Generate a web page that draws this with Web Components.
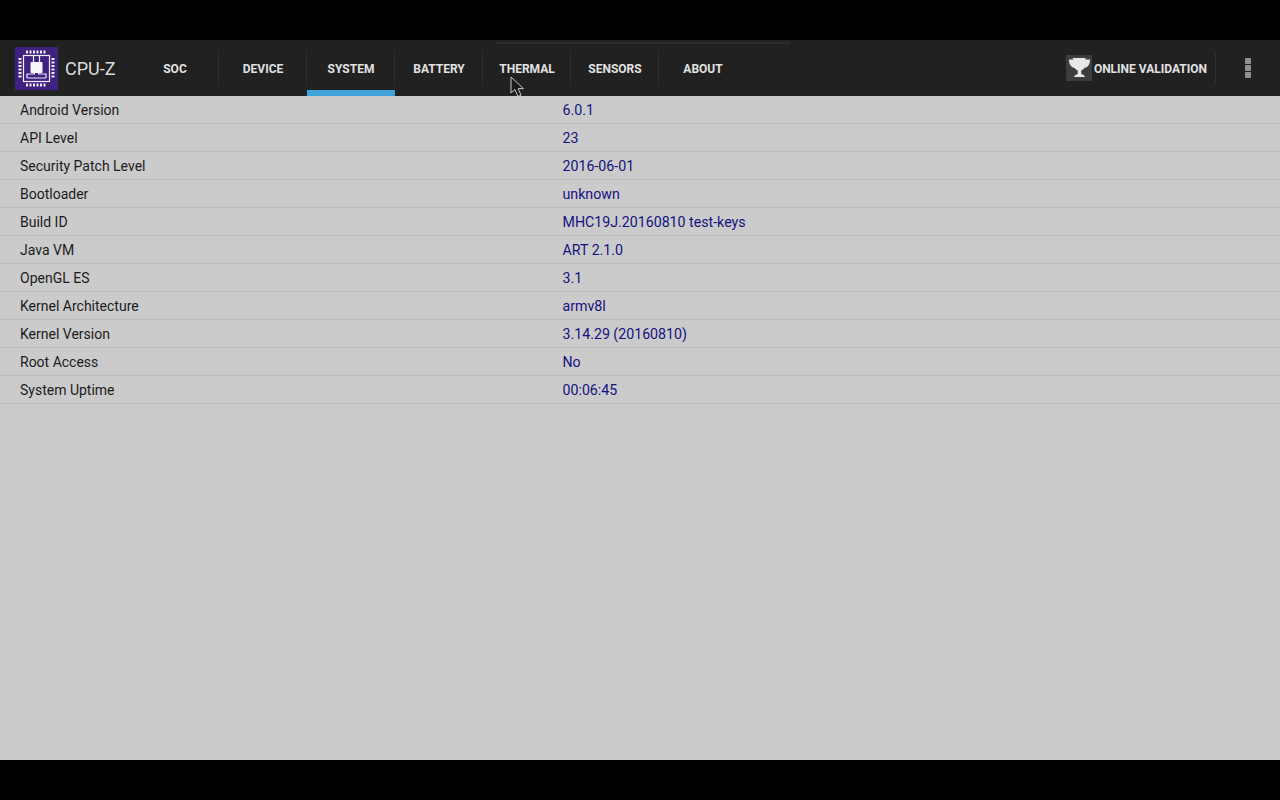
<!DOCTYPE html>
<html>
<head>
<meta charset="utf-8">
<title>CPU-Z</title>
<style>
  html, body { margin: 0; height: 100%; background: #000; }
  body { font-family: Roboto, "Liberation Sans", sans-serif; overflow: hidden; }
</style>
</head>
<body>
<cpuz-app>
  <cpuz-toolbar slot="bar">
    <cpuz-tab>SOC</cpuz-tab>
    <cpuz-tab>DEVICE</cpuz-tab>
    <cpuz-tab active>SYSTEM</cpuz-tab>
    <cpuz-tab>BATTERY</cpuz-tab>
    <cpuz-tab>THERMAL</cpuz-tab>
    <cpuz-tab>SENSORS</cpuz-tab>
    <cpuz-tab last>ABOUT</cpuz-tab>
  </cpuz-toolbar>
  <cpuz-row label="Android Version" value="6.0.1"></cpuz-row>
  <cpuz-row label="API Level" value="23"></cpuz-row>
  <cpuz-row label="Security Patch Level" value="2016-06-01"></cpuz-row>
  <cpuz-row label="Bootloader" value="unknown"></cpuz-row>
  <cpuz-row label="Build ID" value="MHC19J.20160810 test-keys"></cpuz-row>
  <cpuz-row label="Java VM" value="ART 2.1.0"></cpuz-row>
  <cpuz-row label="OpenGL ES" value="3.1"></cpuz-row>
  <cpuz-row label="Kernel Architecture" value="armv8l"></cpuz-row>
  <cpuz-row label="Kernel Version" value="3.14.29 (20160810)"></cpuz-row>
  <cpuz-row label="Root Access" value="No"></cpuz-row>
  <cpuz-row label="System Uptime" value="00:06:45"></cpuz-row>
</cpuz-app>

<script>
class CpuzApp extends HTMLElement {
  constructor() {
    super();
    this.attachShadow({ mode: "open" });
    this.shadowRoot.innerHTML = `
    <style>
    :host {
        display: flex;
        flex-direction: column;
        position: relative;
        width: 1280px;
        height: 800px;
        padding: 40px 0;
        box-sizing: border-box;
        background: #000;
    }
    .list {
        flex: 1;
        background: #cbcbcb;
    }
    .ghost {
        position: absolute;
        left: 495px;
        top: 42px;
        width: 295px;
        height: 2px;
        background: #2c2c2c;
    }
    .cursor {
        position: absolute;
        left: 510px;
        top: 76px;
        width: 16px;
        height: 22px;
    }
    </style>
    <slot name="bar"></slot>
    <div class="list"><slot></slot></div>
    <div class="ghost"></div>
    <svg class="cursor" viewBox="0 0 16 22">
      <path d="M1 1 L1 17 L5 13.500 L8 20.500 L11 19.200 L8.200 12.600 L13.400 12.600 Z" fill="#1a1a1a" stroke="#c8c8c8" stroke-width="1"/>
    </svg>
    `;
  }
}

class CpuzToolbar extends HTMLElement {
  constructor() {
    super();
    this.attachShadow({ mode: "open" });
    this.shadowRoot.innerHTML = `
    <style>
    :host {
        display: flex;
        align-items: stretch;
        height: 56px;
        background: #212121;
        color: #e6e6e6;
        padding-left: 15px;
        padding-right: 16px;
    }
    .logo {
        display: flex;
        align-items: center;
        width: 116px;
        flex: none;
    }
    .logo svg {
        width: 43px;
        height: 43px;
        flex: none;
    }
    .logo span {
        margin-left: 7px;
        font-size: 18px;
        color: #dcdcdc;
    }
    .tabs {
        display: flex;
        flex: 1;
    }
    .validate {
        display: flex;
        align-items: center;
        font-size: 12px;
        font-weight: 700;
        color: #e2e2e2;
        white-space: nowrap;
        padding-top: 1px;
    }
    .validate svg {
        width: 26px;
        height: 26px;
        margin-right: 2px;
        margin-top: -1px;
    }
    .sep {
        width: 1px;
        height: 32px;
        background: #2e2e2e;
        margin: 0 15px 0 8px;
        align-self: center;
    }
    .more {
        display: flex;
        flex-direction: column;
        justify-content: center;
        gap: 1px;
        width: 33px;
        align-items: center;
    }
    .more i {
        width: 6px;
        height: 6px;
        background: #8f8f8f;
    }
    </style>
    <div class="logo">
      <svg viewBox="0 0 43 43">
        <rect width="43" height="43" fill="#3f2180"/>
        <g fill="none" stroke="#f0eef6" stroke-width="1.200">
          <rect x="8.500" y="8.500" width="26" height="26"/>
          <path d="M18.500 8.500v7M24.500 8.500v7M12 31v-4h7.500v-2M31 31v-4h-7.500v-2M12 31h19"/>
        </g>
        <rect x="15.500" y="15" width="12" height="11" rx="1" fill="#f6f6fa"/>
        <g fill="#f0eef6">
          <path d="M11 3.500h2v3h-2zM14.500 3.500h2v3h-2zM18 3.500h2v3h-2zM21.500 3.500h2v3h-2zM25 3.500h2v3h-2zM28.500 3.500h2v3h-2z"/>
          <path d="M11 36.500h2v3h-2zM14.500 36.500h2v3h-2zM18 36.500h2v3h-2zM21.500 36.500h2v3h-2zM25 36.500h2v3h-2zM28.500 36.500h2v3h-2z"/>
          <path d="M3.500 11h3v2h-3zM3.500 14.500h3v2h-3zM3.500 18h3v2h-3zM3.500 21.500h3v2h-3zM3.500 25h3v2h-3zM3.500 28.500h3v2h-3z"/>
          <path d="M36.500 11h3v2h-3zM36.500 14.500h3v2h-3zM36.500 18h3v2h-3zM36.500 21.500h3v2h-3zM36.500 25h3v2h-3zM36.500 28.500h3v2h-3z"/>
        </g>
      </svg>
      <span>CPU-Z</span>
    </div>
    <div class="tabs"><slot></slot></div>
    <div class="validate">
      <svg viewBox="0 0 26 26">
        <rect width="26" height="26" fill="#3d3d3d"/>
        <path d="M6.500 3h13v1.500h4.500c0 4.500-1.500 7.500-5.500 8.500c-.9 1.200-2 2-3.200 2.300v3.700c1.200.6 3.200 1 3.700 3h-11c.5-2 2.500-2.400 3.700-3v-3.700c-1.200-.3-2.300-1.100-3.200-2.300c-4-1-5.500-4-5.500-8.500h4.500z" fill="#e8e8e8"/>
      </svg>
      ONLINE VALIDATION
    </div>
    <div class="sep"></div>
    <div class="more"><i></i><i></i><i></i></div>
    `;
  }
}

class CpuzTab extends HTMLElement {
  constructor() {
    super();
    this.attachShadow({ mode: "open" });
    this.shadowRoot.innerHTML = `
    <style>
    :host {
        display: flex;
        align-items: center;
        justify-content: center;
        position: relative;
        box-sizing: border-box;
        width: 88px;
        padding-top: 1px;
        font-size: 12px;
        font-weight: 700;
        color: #e2e2e2;
    }
    :host::after {
        content: "";
        position: absolute;
        right: 0;
        top: 12px;
        height: 32px;
        width: 1px;
        background: #2e2e2e;
    }
    :host([last])::after {
        display: none;
    }
    :host([active])::before {
        content: "";
        position: absolute;
        left: 0;
        right: 0;
        bottom: 0;
        height: 6px;
        background: #3fa3da;
    }
    </style>
    <slot></slot>
    `;
  }
}

class CpuzRow extends HTMLElement {
  constructor() {
    super();
    this.attachShadow({ mode: "open" });
    this.shadowRoot.innerHTML = `
    <style>
    :host {
        display: grid;
        grid-template-columns: 542.5px 1fr;
        align-items: center;
        box-sizing: border-box;
        height: 28px;
        padding-left: 20px;
        padding-top: 1px;
        border-bottom: 1px solid #bdbdbd;
        font-size: 14px;
    }
    .label { color: #1b1b1b; }
    .value { color: #14127e; font-size: 14.2px; }
    </style>
    <span class="label"></span>
    <span class="value"></span>
    `;
    this.shadowRoot.querySelector(".label").textContent = this.getAttribute("label");
    this.shadowRoot.querySelector(".value").textContent = this.getAttribute("value");
  }
}

customElements.define("cpuz-app", CpuzApp);
customElements.define("cpuz-toolbar", CpuzToolbar);
customElements.define("cpuz-tab", CpuzTab);
customElements.define("cpuz-row", CpuzRow);
</script>
</body>
</html>
